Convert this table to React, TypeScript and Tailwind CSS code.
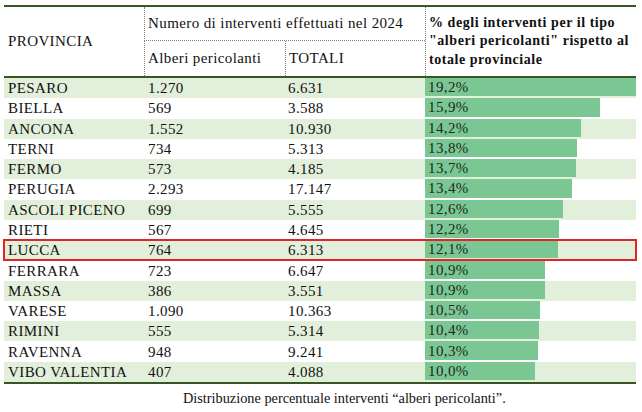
const rows: [string, string, string, string][] = [
  ['PESARO', '1.270', '6.631', '19,2'],
  ['BIELLA', '569', '3.588', '15,9'],
  ['ANCONA', '1.552', '10.930', '14,2'],
  ['TERNI', '734', '5.313', '13,8'],
  ['FERMO', '573', '4.185', '13,7'],
  ['PERUGIA', '2.293', '17.147', '13,4'],
  ['ASCOLI PICENO', '699', '5.555', '12,6'],
  ['RIETI', '567', '4.645', '12,2'],
  ['LUCCA', '764', '6.313', '12,1'],
  ['FERRARA', '723', '6.647', '10,9'],
  ['MASSA', '386', '3.551', '10,9'],
  ['VARESE', '1.090', '10.363', '10,5'],
  ['RIMINI', '555', '5.314', '10,4'],
  ['RAVENNA', '948', '9.241', '10,3'],
  ['VIBO VALENTIA', '407', '4.088', '10,0'],
];

const MAX = 19.2;
const BAR_W = 211;

export default function App() {
  return (
    <div className="w-[642px] h-[412px] bg-white pl-[4px] pt-[5px] text-[#111] font-['Liberation_Serif',serif]">
      <div className="w-[632px]">
        {/* header */}
        <div className="grid grid-cols-[140px_141px_140px_211px] grid-rows-[34px_35px] border-t-2 border-b-2 border-[#375623] text-[15px] tracking-[0.4px]">
          <div className="row-span-2 flex items-center pl-[4px]">PROVINCIA</div>
          <div className="col-span-2 flex items-center pl-[3px] border-l border-b border-dotted border-[#808080]">
            Numero di interventi effettuati nel 2024
          </div>
          <div className="row-span-2 col-start-4 row-start-1 flex flex-col justify-center pl-[3px] border-l border-dotted border-[#808080] font-bold text-[14px] leading-[18.5px] tracking-[0.55px]">
            <span>% degli interventi per il tipo</span>
            <span>"alberi pericolanti" rispetto al</span>
            <span>totale provinciale</span>
          </div>
          <div className="col-start-2 row-start-2 flex items-center pl-[3px] border-l border-dotted border-[#808080]">
            Alberi pericolanti
          </div>
          <div className="col-start-3 row-start-2 flex items-center pl-[3px] border-l border-dotted border-[#808080]">
            TOTALI
          </div>
        </div>

        {/* body */}
        <div className="border-b-2 border-[#375623]">
          {rows.map(([prov, alb, tot, pct], i) => (
            <div
              key={prov}
              className={
                'grid grid-cols-[140px_141px_140px_211px] h-[20.27px] items-center text-[15px] leading-[18px] tracking-[0.4px] ' +
                (i % 2 === 0 ? 'bg-[#e2efda] ' : 'bg-white ') +
                (prov === 'LUCCA' ? 'relative z-10 outline-2 -outline-offset-1 outline-[#e0242a]' : '')
              }
            >
              <div className="pl-[4px]">{prov}</div>
              <div className="pl-[4px]">{alb}</div>
              <div className="pl-[3px]">{tot}</div>
              <div className="h-full pb-[2px]">
                <div
                  className="h-full bg-[#7bc794] pl-[3px] flex items-center text-[#1c2a1c]"
                  style={{ width: (parseFloat(pct.replace(',', '.')) / MAX) * BAR_W }}
                >
                  {pct}%
                </div>
              </div>
            </div>
          ))}
        </div>

        <div className="pl-[179px] mt-[5px] text-[14.3px] leading-[18px]">
          Distribuzione percentuale interventi “alberi pericolanti”.
        </div>
      </div>
    </div>
  );
}
